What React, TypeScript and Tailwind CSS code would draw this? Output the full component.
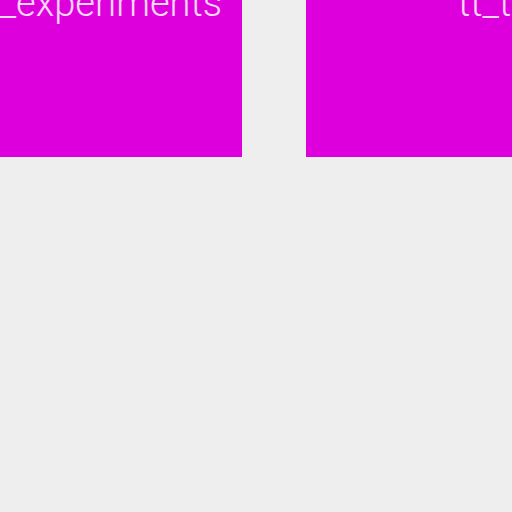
export default function App() {
  return (
    <div className="flex h-[512px] w-[512px] gap-[64px] overflow-hidden bg-[#eeeeee] font-['Roboto',sans-serif]">
      <div className="flex h-[157px] w-[242px] shrink-0 justify-end overflow-hidden bg-[#dd00dd] pr-[20px]">
        <span className="-mt-[16px] whitespace-nowrap text-[38px] font-light leading-none text-white/85">
          tt_experiments
        </span>
      </div>
      <div className="flex h-[157px] w-[242px] shrink-0 overflow-hidden bg-[#dd00dd] pl-[152px]">
        <span className="-mt-[16px] whitespace-nowrap text-[38px] font-light leading-none text-white/85">
          tt_transformations
        </span>
      </div>
    </div>
  );
}
